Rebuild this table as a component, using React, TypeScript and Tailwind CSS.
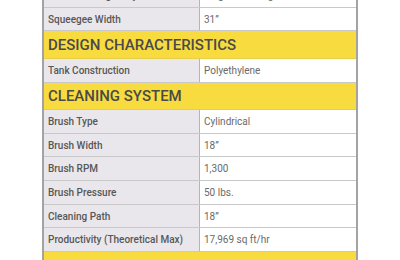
import React from "react";

type Row = { kind: "row"; label: string; value: string; h?: number } | { kind: "head"; title: string; h: number };

const rows: Row[] = [
  { kind: "row", label: "Machine Weight Dry", value: "Single Rear Engine" },
  { kind: "row", label: "Squeegee Width", value: "31\u201D", h: 23 },
  { kind: "head", title: "DESIGN CHARACTERISTICS", h: 28 },
  { kind: "row", label: "Tank Construction", value: "Polyethylene" },
  { kind: "head", title: "CLEANING SYSTEM", h: 27 },
  { kind: "row", label: "Brush Type", value: "Cylindrical" },
  { kind: "row", label: "Brush Width", value: "18\u201D", h: 23 },
  { kind: "row", label: "Brush RPM", value: "1,300" },
  { kind: "row", label: "Brush Pressure", value: "50 lbs." },
  { kind: "row", label: "Cleaning Path", value: "18\u201D", h: 23 },
  { kind: "row", label: "Productivity (Theoretical Max)", value: "17,969 sq ft/hr" },
  { kind: "head", title: "SOLUTION SYSTEM", h: 28 },
];

export default function App() {
  return (
    <div className="w-[400px] h-[260px] overflow-hidden bg-white" style={{ fontFamily: "Roboto, 'Liberation Sans', sans-serif" }}>
      <div className="ml-[42px] w-[316px] mt-[-16px] border-l-2 border-r-2 border-[#a3a3a3]">
        {rows.map((r, i) =>
          r.kind === "head" ? (
            <div
              key={i}
              className="flex items-center bg-[#f8dc3f] pl-[4px] pt-[1px] text-[15px] font-medium text-[#4a4a4a] border-b border-[#e6cf4a]"
              style={{ height: r.h }}
            >
              {r.title}
            </div>
          ) : (
            <div key={i} className="grid grid-cols-2 border-b border-[#c9c9c9]" style={{ height: r.h ?? 24 }}>
              <div className="flex items-center bg-[#e9e7ec] pl-[4px] text-[10px] font-medium text-[#575757] border-r border-[#b5b5b5]">
                {r.label}
              </div>
              <div className="flex items-center bg-white pl-[4px] text-[10px] text-[#6a6a6a]">{r.value}</div>
            </div>
          )
        )}
      </div>
    </div>
  );
}
